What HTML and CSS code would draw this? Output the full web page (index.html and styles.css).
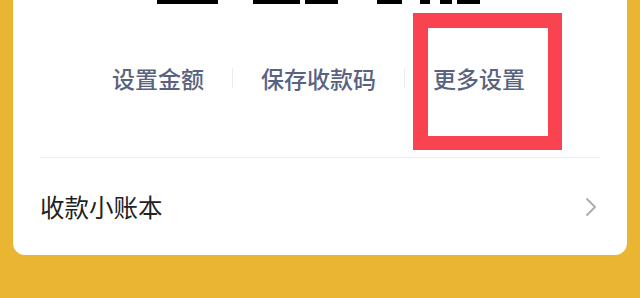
FILE: index.html
```html
<!DOCTYPE html>
<html>
<head>
	<title>收款</title>
	<link rel="stylesheet" href="styles.css">
</head>
<body>
	<div class="pagina">
		<div class="tarjeta">
			<div class="monto">
				<span class="trazo" style="margin-left:117px;width:61px"></span>
				<span class="trazo" style="margin-left:35px;width:47px"></span>
				<span class="trazo" style="margin-left:5px;width:33px"></span>
				<span class="trazo" style="margin-left:39px;width:25px"></span>
				<span class="trazo" style="margin-left:18px;width:10px"></span>
				<span class="trazo" style="margin-left:10px;width:12px"></span>
				<span class="trazo" style="margin-left:5px;width:23px"></span>
			</div>

			<div class="acciones">
				<span class="accion">设置金额</span>
				<span class="separador"></span>
				<span class="accion">保存收款码</span>
				<span class="separador"></span>
				<span class="accion">更多设置</span>
			</div>

			<div class="fila">
				<span class="fila-texto">收款小账本</span>
				<svg class="flecha" width="12" height="20" viewBox="0 0 12 20">
					<polyline points="2,2 10,10 2,18" fill="none" stroke="#ababab" stroke-width="1.8" stroke-linecap="round" stroke-linejoin="round"/>
				</svg>
			</div>
		</div>

		<div class="marca"></div>
	</div>
</body>
</html>
```

FILE: styles.css
```css
body{
	margin: 0;
	background: #e9b532;
	font-family: "Noto Sans CJK SC", "Noto Sans", sans-serif;
}

.pagina{
	position: relative;
	width: 640px;
	height: 298px;
	overflow: hidden;
}

.tarjeta{
	margin: 0 13px;
	height: 255px;
	box-sizing: border-box;
	padding: 0 27px;
	background: #fff;
	border-radius: 0 0 12px 12px;
}

.monto{
	display: flex;
	height: 4px;
}

.trazo{
	display: block;
	height: 4px;
	background: #000;
}

.acciones{
	display: flex;
	align-items: center;
	margin-top: 58px;
	padding-left: 72px;
	padding-bottom: 63px;
	border-bottom: 1px solid #f0f0f0;
}

.accion{
	font-size: 23px;
	line-height: 32px;
	font-weight: 500;
	color: #59637f;
}

.separador{
	width: 1px;
	height: 20px;
	margin: 0 28px;
	background: #ededed;
}

.fila{
	display: flex;
	align-items: center;
	justify-content: space-between;
	margin-top: 33px;
	padding-right: 3px;
}

.fila-texto{
	font-size: 24.5px;
	line-height: 32px;
	color: #222;
}

.flecha{
	display: block;
}

.marca{
	position: absolute;
	left: 413px;
	top: 13px;
	width: 120px;
	height: 108px;
	border: 15px solid #fa4350;
	border-right-width: 14px;
	border-bottom-width: 14px;
}
```
